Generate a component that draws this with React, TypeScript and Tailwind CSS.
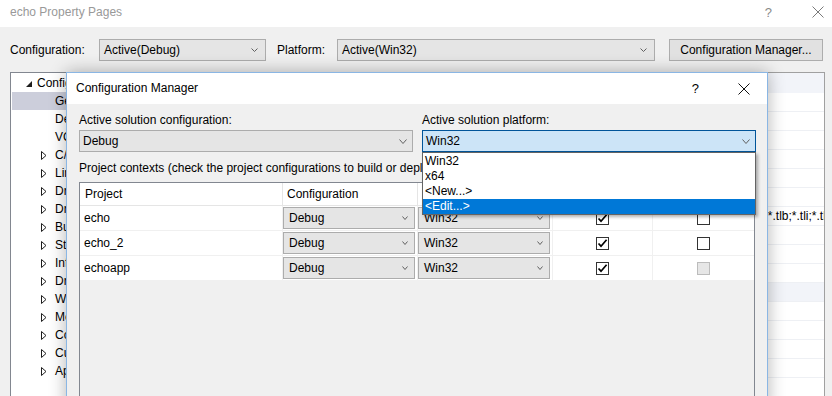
import React from "react";

function Chevron({ w = 8, h = 5, color = "#606060", className = "" }: { w?: number; h?: number; color?: string; className?: string }) {
  return (
    <svg width={w} height={h} viewBox={`0 0 ${w} ${h}`} className={className}>
      <path d={`M0.5 0.5 L${w / 2} ${h - 0.5} L${w - 0.5} 0.5`} fill="none" stroke={color} strokeWidth="1" />
    </svg>
  );
}

function XIcon({ size = 11, color = "#000" }: { size?: number; color?: string }) {
  return (
    <svg width={size} height={size} viewBox={`0 0 ${size} ${size}`}>
      <path d={`M0.5 0.5 L${size - 0.5} ${size - 0.5} M${size - 0.5} 0.5 L0.5 ${size - 0.5}`} stroke={color} strokeWidth="1" fill="none" />
    </svg>
  );
}

function Combo({ text, className = "", focused = false, small = false }: { text: string; className?: string; focused?: boolean; small?: boolean }) {
  return (
    <div
      className={`flex items-center h-[22px] border ${focused ? "border-[#005499] bg-[#cce4f7]" : "border-[#acacac] bg-[#e5e5e5]"} ${className}`}
    >
      <span className={small ? "pl-[5px] whitespace-nowrap" : "pl-[3px] whitespace-nowrap"}>{text}</span>
      {small ? (
        <Chevron w={6} h={4} className="ml-auto mr-[6px]" />
      ) : (
        <Chevron w={8} h={5} className="ml-auto mr-[5px]" />
      )}
    </div>
  );
}

function Check({ checked = false, disabled = false }: { checked?: boolean; disabled?: boolean }) {
  return (
    <div
      className={`w-[13px] h-[13px] border flex items-center justify-center ${disabled ? "border-[#bcbcbc] bg-[#e6e6e6]" : "border-[#333333] bg-white"}`}
    >
      {checked && (
        <svg width="11" height="11" viewBox="0 0 11 11">
          <path d="M1.5 5.5 L4 8.2 L9.6 1.8" fill="none" stroke="#000" strokeWidth="1.7" />
        </svg>
      )}
    </div>
  );
}

const treeItems: { label: string; kind: "root" | "leaf" | "branch"; selected?: boolean }[] = [
  { label: "Configuration Properties", kind: "root" },
  { label: "General", kind: "leaf", selected: true },
  { label: "Debugging", kind: "leaf" },
  { label: "VC++ Directories", kind: "leaf" },
  { label: "C/C++", kind: "branch" },
  { label: "Linker", kind: "branch" },
  { label: "Driver Settings", kind: "branch" },
  { label: "Driver Signing", kind: "branch" },
  { label: "Build Events", kind: "branch" },
  { label: "StampInf", kind: "branch" },
  { label: "Inf2Cat", kind: "branch" },
  { label: "Driver Install", kind: "branch" },
  { label: "WPP Tracing", kind: "branch" },
  { label: "Message Compiler", kind: "branch" },
  { label: "Code Analysis", kind: "branch" },
  { label: "Custom Build Step", kind: "branch" },
  { label: "ApiValidator", kind: "branch" },
];

const gridRows: { name: string; value?: string; category?: boolean }[] = [
  { name: "General", category: true },
  { name: "Output Directory", value: "$(SolutionDir)$(Configuration)\\" },
  { name: "Intermediate Directory", value: "$(Configuration)\\" },
  { name: "Target Name", value: "$(ProjectName)" },
  { name: "Target Extension", value: ".exe" },
  { name: "Target Platform", value: "Desktop" },
  { name: "Target Platform Version", value: "10.0.15063.0" },
  {
    name: "Extensions to Delete on Clean",
    value: "*.cdf;*.cache;*.obj;*.obj.enc;*.ilk;*.ipdb;*.iobj;*.resources;*.tlb;*.tli;*.tlh;*.tmp;*.rsp;*.pgc;*.pgd",
  },
  { name: "Build Log File", value: "$(IntDir)$(MSBuildProjectName).log" },
  { name: "Platform Toolset", value: "WindowsApplicationForDrivers10.0" },
  { name: "Enable Managed Incremental Build", value: "No" },
  { name: "Project Defaults", category: true },
  { name: "Configuration Type", value: "Application (.exe)" },
  { name: "Use of MFC", value: "Use Standard Windows Libraries" },
  { name: "Character Set", value: "Use Unicode Character Set" },
  { name: "Whole Program Optimization", value: "No Whole Program Optimization" },
  { name: "Windows SDK Version", value: "10.0" },
];

const projects = ["echo", "echo_2", "echoapp"];

export default function App() {
  return (
    <div className="relative w-[832px] h-[396px] overflow-hidden bg-[#f0f0f0] text-[12px] leading-[15px] text-black font-['Liberation_Sans',Arial,sans-serif]">
      {/* Title bar */}
      <div className="h-[27px] bg-white flex items-center pl-[10px] pb-[3px]">
        <span className="text-[#999999]">echo Property Pages</span>
        <div className="ml-auto flex items-center">
          <span className="text-[#8a8a8a] text-[13px] mr-[40px]">?</span>
          <div className="mr-[8px]">
            <XIcon size={12} color="#7a7a7a" />
          </div>
        </div>
      </div>

      {/* Configuration bar */}
      <div className="flex items-center h-[22px] mt-[12px] pl-[10px]">
        <span className="w-[89px] whitespace-nowrap">Configuration:</span>
        <div className="flex items-center h-[22px] w-[167px] border border-[#acacac] bg-[#e5e5e5]">
          <span className="pl-[4px]">Active(Debug)</span>
          <Chevron w={7} h={4} className="ml-auto mr-[7px]" />
        </div>
        <span className="w-[60px] ml-[11px] whitespace-nowrap">Platform:</span>
        <div className="flex items-center h-[22px] w-[318px] border border-[#acacac] bg-[#e5e5e5]">
          <span className="pl-[4px]">Active(Win32)</span>
          <Chevron w={7} h={4} className="ml-auto mr-[7px]" />
        </div>
        <button className="ml-[14px] w-[154px] h-[22px] border border-[#adadad] bg-[#e1e1e1] flex items-center justify-center">
          Configuration Manager...
        </button>
      </div>

      {/* Panes */}
      <div className="flex mt-[11px] pl-[10px] gap-[4px] h-[330px]">
        {/* Tree */}
        <div className="w-[186px] h-full border border-[#828790] bg-white pt-[1px] overflow-hidden">
          {treeItems.map((it, i) => (
            <div
              key={i}
              className={`flex items-center h-[18px] ml-[1px] whitespace-nowrap ${it.selected ? "bg-[#cccedb]" : ""}`}
            >
              {it.kind === "root" && (
                <>
                  <svg width="6" height="6" viewBox="0 0 6 6" className="ml-[14px] mt-[1px]">
                    <path d="M6 0 L6 6 L0 6 Z" fill="#1e1e1e" />
                  </svg>
                  <span className="ml-[5px]">{it.label}</span>
                </>
              )}
              {it.kind === "leaf" && <span className="ml-[43px]">{it.label}</span>}
              {it.kind === "branch" && (
                <>
                  <svg width="6" height="9" viewBox="0 0 6 9" className="ml-[29px]">
                    <path d="M0.5 0.5 L5 4.5 L0.5 8.5 Z" fill="none" stroke="#1e1e1e" strokeWidth="1" />
                  </svg>
                  <span className="ml-[8px]">{it.label}</span>
                </>
              )}
            </div>
          ))}
        </div>

        {/* Property grid */}
        <div className="w-[625px] h-full border border-[#a0a0a0] bg-white overflow-hidden">
          {gridRows.map((r, i) =>
            r.category ? (
              <div key={i} className={`flex items-center bg-[#f2f4f9] whitespace-nowrap ${i === 0 ? "h-[20px]" : "h-[19px] border-b border-[#eef0f4]"}`}>
                <span className="pl-[4px] font-bold">{r.name}</span>
              </div>
            ) : (
              <div key={i} className="flex items-center h-[19px] border-b border-[#eef0f4] whitespace-nowrap">
                <span className="w-[265px] pl-[20px] shrink-0 overflow-hidden">{r.name}</span>
                <span className="pl-[3px]">{r.value}</span>
              </div>
            )
          )}
        </div>
      </div>

      {/* Configuration Manager dialog */}
      <div className="absolute left-[66px] top-[72px] w-[702px] h-[340px] border border-[#8ab6e4] bg-[#f0f0f0] shadow-[0_0_16px_rgba(0,0,0,0.3)] flex flex-col">
        <div className="h-[31px] bg-white flex items-center pl-[9px] shrink-0">
          <span>Configuration Manager</span>
          <span className="ml-auto text-[13px] mr-[39px]">?</span>
          <div className="mr-[17px]">
            <XIcon size={12} color="#111" />
          </div>
        </div>

        <div className="px-[12px] pt-[9px] flex flex-col">
          <div className="flex gap-[9px]">
            <div className="w-[334px] flex flex-col">
              <span className="whitespace-nowrap">Active solution configuration:</span>
              <Combo text="Debug" className="mt-[2px] w-[334px]" />
            </div>
            <div className="w-[334px] flex flex-col">
              <span className="whitespace-nowrap">Active solution platform:</span>
              <div className="relative mt-[2px]">
                <Combo text="Win32" focused className="w-[334px]" />
                <div className="absolute left-0 top-[22px] w-[334px] h-[63px] z-10 bg-white border border-[#646464] pt-[1px] shadow-[2px_2px_3px_rgba(0,0,0,0.3)]">
                  <div className="h-[15px] flex items-center pl-[2px]">Win32</div>
                  <div className="h-[15px] flex items-center pl-[2px]">x64</div>
                  <div className="h-[15px] flex items-center pl-[2px]">&lt;New...&gt;</div>
                  <div className="h-[15px] flex items-center pl-[2px] bg-[#0078d7] text-white">&lt;Edit...&gt;</div>
                </div>
              </div>
            </div>
          </div>

          <div className="mt-[9px] whitespace-nowrap overflow-hidden">
            Project contexts (check the project configurations to build or deploy):
          </div>

          <div className="mt-[6px] w-[676px] h-[230px] border border-[#828790] bg-[#f0f0f0] flex flex-col">
            <div className="flex h-[23px] bg-white border-b border-[#e5e5e5] shrink-0">
              <div className="w-[202px] pl-[5px] flex items-center">Project</div>
              <div className="w-[135px] pl-[4px] flex items-center border-l border-[#e5e5e5]">Configuration</div>
              <div className="w-[135px] pl-[4px] flex items-center border-l border-[#e5e5e5]">Platform</div>
              <div className="w-[100px] pl-[4px] flex items-center border-l border-[#e5e5e5]">Build</div>
              <div className="w-[102px] pl-[4px] flex items-center border-l border-[#e5e5e5]">Deploy</div>
            </div>
            {projects.map((p, i) => (
              <div key={p} className="flex h-[25px] bg-white border-b border-[#f0f0f0] shrink-0">
                <div className="w-[202px] pl-[4px] flex items-center">{p}</div>
                <div className="w-[135px] border-l border-[#f0f0f0] pt-[1px]">
                  <Combo text="Debug" small className="w-[132px]" />
                </div>
                <div className="w-[135px] border-l border-[#f0f0f0] pt-[1px]">
                  <Combo text="Win32" small className="w-[132px]" />
                </div>
                <div className="w-[100px] border-l border-[#f0f0f0] flex items-center justify-center">
                  <Check checked />
                </div>
                <div className="w-[102px] border-l border-[#f0f0f0] flex items-center justify-center">
                  <Check disabled={i === 2} />
                </div>
              </div>
            ))}
          </div>
        </div>
      </div>
    </div>
  );
}
